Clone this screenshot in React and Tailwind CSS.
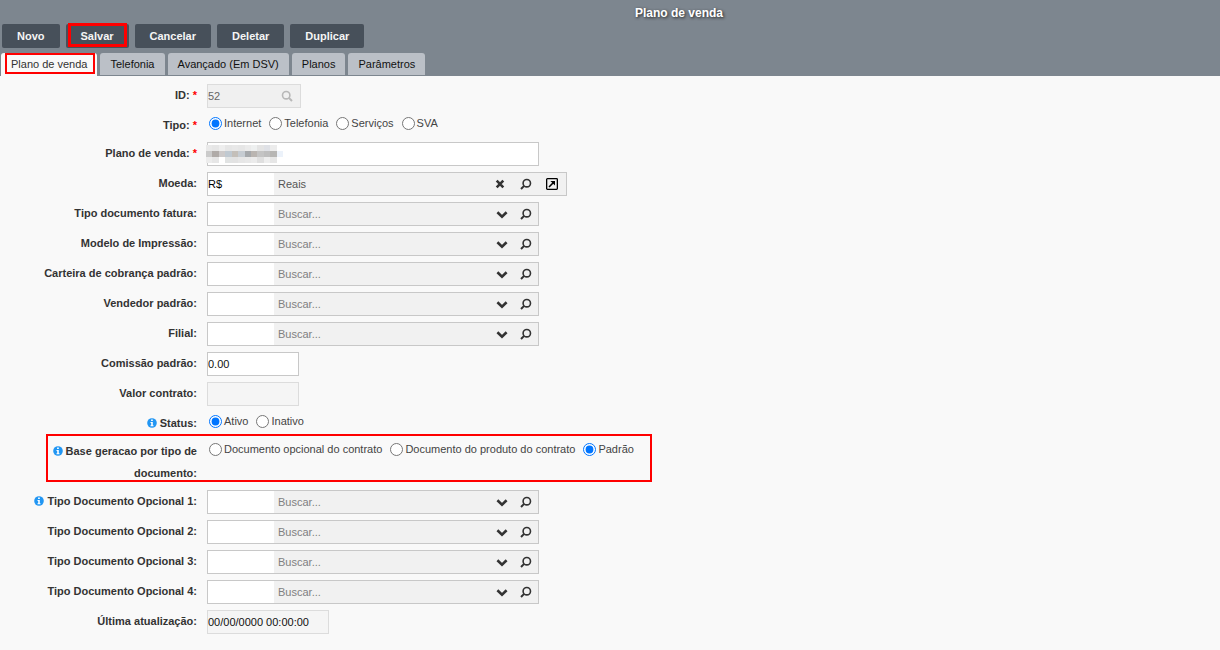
import { useState } from 'react'

const buttons = ['Novo', 'Salvar', 'Cancelar', 'Deletar', 'Duplicar']
const tabs = ['Plano de venda', 'Telefonia', 'Avançado (Em DSV)', 'Planos', 'Parâmetros']

// colours of the hidden value, one list per row of cells
const mosaic = [
  ['#e9e9e9', '#e6e6e6', '#eeeeee', '#e6e6e6', '#e8e8e8', '#e6e6e6', '#ebebeb', '#eef0f0', '#e4e4e4', '#dfe1e6', '#ececec', '#ffffff'],
  ['#cbcbcb', '#b0aba8', '#cdcaca', '#c0c9d1', '#c4bfb9', '#c6ccd2', '#a6a9ac', '#bab5b1', '#c4c4c4', '#bebebe', '#b7b6b4', '#ecf2fa'],
  ['#ececec', '#e6e6e6', '#ffffff', '#e1e3e3', '#e2e2e2', '#e6e6e6', '#e8e8e8', '#ebebeb', '#dfdfdf', '#eeeeee', '#e6e6e6', '#ffffff'],
]

function Glass({ flip }) {
  return (
    <svg viewBox="0 0 12 12" className={flip ? 'size-3 -scale-x-100' : 'size-3'} fill="none" stroke="currentColor" aria-hidden="true">
      <circle cx="5.2" cy="5.2" r="3.7" strokeWidth="1.6" />
      <path d="M7.9 7.9 11 11" strokeWidth="2" />
    </svg>
  )
}

function Chevron() {
  return (
    <svg viewBox="0 0 12 12" className="size-3" fill="none" stroke="currentColor" aria-hidden="true">
      <path d="M1.4 4.2 6 8.6l4.6-4.4" strokeWidth="2.6" />
    </svg>
  )
}

function Times() {
  return (
    <svg viewBox="0 0 12 12" className="size-3" fill="none" stroke="currentColor" aria-hidden="true">
      <path d="m2.7 2.7 6.6 6.6M9.3 2.7 2.7 9.3" strokeWidth="2.6" />
    </svg>
  )
}

function External() {
  return (
    <svg viewBox="0 0 12 12" className="size-3 text-black" fill="none" stroke="currentColor" aria-hidden="true">
      <rect x=".65" y=".65" width="10.7" height="10.7" rx=".8" strokeWidth="1.3" />
      <path d="m3 9 4.6-4.6" strokeWidth="1.5" />
      <path d="M4.4 3h4.6v4.6z" fill="currentColor" stroke="none" />
    </svg>
  )
}

function Info() {
  return (
    <svg viewBox="0 0 10 10" className="mr-[3px] inline-block size-2.5 align-[-1px]" aria-hidden="true">
      <circle cx="5" cy="5" r="4.8" fill="#2196f3" />
      <path d="M4.1 1.6h1.7v1.5H4.1zM3.5 4h2.3v3.2h.7v1.1h-3V7.2h.7V5h-.7z" fill="#fff" />
    </svg>
  )
}

function Row({ label, htmlFor, required, info, children }) {
  const content = (
    <>
      {info && <Info />}
      {label}:{required && <span className="text-[#f00]"> *</span>}
    </>
  )
  const cls = 'w-[197px] shrink-0 pl-5 text-right font-bold leading-[22px] text-[#333]'
  return (
    <div className="flex items-start gap-2.5">
      {htmlFor ? <label htmlFor={htmlFor} className={cls}>{content}</label> : <span className={cls}>{content}</span>}
      {children}
    </div>
  )
}

function Radios({ name, label, options, initial }) {
  const [value, setValue] = useState(initial)
  return (
    <div role="radiogroup" aria-label={label} className="flex h-[18px] flex-wrap items-center gap-2 pl-0.5">
      {options.map((o) => (
        <label key={o} className="flex items-center gap-0.5 text-[#444]">
          <input type="radio" name={name} checked={value === o} onChange={() => setValue(o)} className="size-[13px]" />
          {o}
        </label>
      ))}
    </div>
  )
}

function Lookup({ id, label, code = '', text = '' }) {
  const btn = 'flex w-6 items-center justify-center'
  const wideBtn = 'flex w-[26px] items-center justify-center'
  return (
    <div className={code ? 'flex h-6 w-[360px] border border-[#c8c8c8] bg-[#f1f1f1] pr-px text-[#333]' : 'flex h-6 w-[332px] border border-[#c8c8c8] bg-[#f1f1f1] text-[#333]'}>
      <input id={id} defaultValue={code} className="w-[66px] bg-white text-black outline-none" />
      <input
        aria-label={`${label} descrição`}
        defaultValue={text}
        placeholder="Buscar..."
        className="min-w-0 flex-1 pl-1 text-[#555] outline-none placeholder:text-[#808080]"
      />
      {code ? (
        <>
          <button type="button" aria-label="Limpar" className={wideBtn}><Times /></button>
          <button type="button" aria-label="Pesquisar" className={wideBtn}><Glass flip /></button>
          <button type="button" aria-label="Abrir" className={wideBtn}><External /></button>
        </>
      ) : (
        <>
          <button type="button" aria-label="Expandir" className={btn}><Chevron /></button>
          <button type="button" aria-label="Pesquisar" className={btn}><Glass flip /></button>
        </>
      )}
    </div>
  )
}

function LookupRow({ id, label, info, ...rest }) {
  return (
    <Row label={label} htmlFor={id} info={info}>
      <Lookup id={id} label={label} {...rest} />
    </Row>
  )
}

export default function App() {
  const [tab, setTab] = useState(tabs[0])

  return (
    <div className="min-h-screen bg-[#f9f9f9] font-['Liberation_Sans',Arial,sans-serif] text-[11px]">
      <header className="bg-[#7d868f]">
        <h1 className="h-6 pl-[138px] text-center text-xs font-bold leading-[26px] text-white [text-shadow:1px_1px_3px_#222]">
          Plano de venda
        </h1>
        <div className="flex gap-1.5 pl-0.5">
          {buttons.map((b) => (
            <button key={b} type="button" className="relative h-6 rounded-xs bg-[#47505a] px-[15px] font-bold text-[#f5f5f5]">
              {b}
              {b === 'Salvar' && <span className="absolute inset-x-0.5 -top-px bottom-px border-3 border-[#f00]" />}
            </button>
          ))}
        </div>
        <div role="tablist" className="flex gap-[3px] pt-[5px] pl-px">
          {tabs.map((t) => (
            <button
              key={t}
              type="button"
              role="tab"
              aria-selected={tab === t}
              onClick={() => setTab(t)}
              className={
                tab === t
                  ? 'relative h-[23px] rounded-t-[3px] bg-[#f9f9f9] px-2.5 text-[#333]'
                  : 'mb-px h-[22px] rounded-t-[3px] bg-[#bbc0c7] px-2.5 text-[#111]'
              }
            >
              {t}
              {t === tabs[0] && tab === t && <span className="absolute top-0 right-0.5 bottom-0.5 left-1 border-2 border-[#f00]" />}
            </button>
          ))}
        </div>
      </header>

      <form className="flex flex-col gap-1.5 py-2" onSubmit={(e) => e.preventDefault()}>
        <Row label="ID" htmlFor="id" required>
          <div className="flex h-6 w-[94px] border border-[#dcdcdc] bg-[#f0f0f0]">
            <input id="id" readOnly defaultValue="52" className="min-w-0 flex-1 text-[#666] outline-none" />
            <button type="button" aria-label="Pesquisar ID" className="flex w-[26px] items-center justify-center text-[#b8b8b8]"><Glass /></button>
          </div>
        </Row>
        <Row label="Tipo" required>
          <Radios name="tipo" label="Tipo" initial="Internet" options={['Internet', 'Telefonia', 'Serviços', 'SVA']} />
        </Row>
        <Row label="Plano de venda" htmlFor="plano" required>
          <div className="relative">
            <input id="plano" className="h-6 w-[332px] border border-[#c8c8c8] bg-white text-black outline-none" />
            <svg viewBox="0 0 72 18" preserveAspectRatio="none" className="absolute top-[3px] -left-px h-[18px] w-[77px]" shapeRendering="crispEdges" aria-hidden="true">
              {mosaic.map((line, y) => line.map((c, x) => <rect key={`${x}-${y}`} x={x * 6} y={y * 6} width="6" height="6" fill={c} />))}
            </svg>
          </div>
        </Row>
        <LookupRow id="moeda" label="Moeda" code="R$" text="Reais" />
        <LookupRow id="fatura" label="Tipo documento fatura" />
        <LookupRow id="modelo" label="Modelo de Impressão" />
        <LookupRow id="carteira" label="Carteira de cobrança padrão" />
        <LookupRow id="vendedor" label="Vendedor padrão" />
        <LookupRow id="filial" label="Filial" />
        <Row label="Comissão padrão" htmlFor="comissao">
          <input id="comissao" defaultValue="0.00" className="h-6 w-[92px] border border-[#c8c8c8] bg-white text-[#111] outline-none" />
        </Row>
        <Row label="Valor contrato" htmlFor="valor">
          <input id="valor" readOnly className="h-6 w-[92px] border border-[#dcdcdc] bg-[#f5f5f5] outline-none" />
        </Row>
        <Row label="Status" info>
          <Radios name="status" label="Status" initial="Ativo" options={['Ativo', 'Inativo']} />
        </Row>
        <div className="relative">
          <Row label="Base geracao por tipo de documento" info>
            <Radios
              name="base"
              label="Base geracao por tipo de documento"
              initial="Padrão"
              options={['Documento opcional do contrato', 'Documento do produto do contrato', 'Padrão']}
            />
          </Row>
          <div className="pointer-events-none absolute -top-1.5 bottom-0.5 left-[46px] w-[606px] border-2 border-[#f00]" />
        </div>
        <LookupRow id="opcional1" label="Tipo Documento Opcional 1" info />
        <LookupRow id="opcional2" label="Tipo Documento Opcional 2" />
        <LookupRow id="opcional3" label="Tipo Documento Opcional 3" />
        <LookupRow id="opcional4" label="Tipo Documento Opcional 4" />
        <Row label="Última atualização" htmlFor="atualizacao">
          <input id="atualizacao" readOnly defaultValue="00/00/0000 00:00:00" className="h-6 w-[122px] border border-[#dcdcdc] bg-[#f5f5f5] text-[#111] outline-none" />
        </Row>
      </form>
    </div>
  )
}
